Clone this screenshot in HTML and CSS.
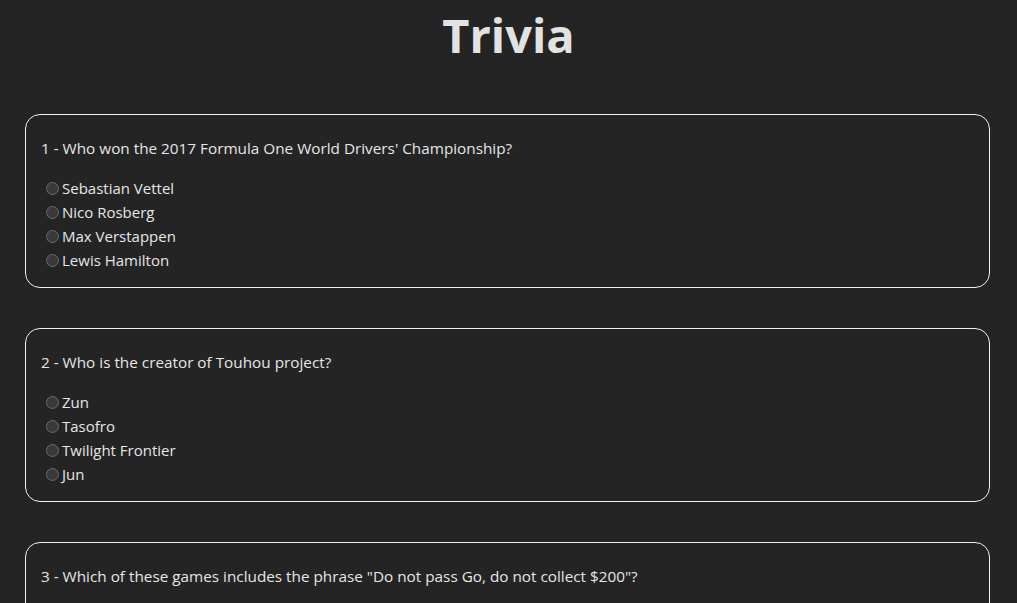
FILE: index.html
```html
<!DOCTYPE html>
<html lang="en">
<head>
<meta charset="utf-8">
<title>Trivia</title>
<link rel="stylesheet" href="styles.css">
</head>
<body>
<h1 class="title">Trivia</h1>
<div class="quiz">
  <div class="question">
    <p class="prompt">1 - Who won the 2017 Formula One World Drivers' Championship?</p>
    <label class="option"><input type="radio" name="q1"><span>Sebastian Vettel</span></label>
    <label class="option"><input type="radio" name="q1"><span>Nico Rosberg</span></label>
    <label class="option"><input type="radio" name="q1"><span>Max Verstappen</span></label>
    <label class="option"><input type="radio" name="q1"><span>Lewis Hamilton</span></label>
  </div>
  <div class="question">
    <p class="prompt">2 - Who is the creator of Touhou project?</p>
    <label class="option"><input type="radio" name="q2"><span>Zun</span></label>
    <label class="option"><input type="radio" name="q2"><span>Tasofro</span></label>
    <label class="option"><input type="radio" name="q2"><span>Twilight Frontier</span></label>
    <label class="option"><input type="radio" name="q2"><span>Jun</span></label>
  </div>
  <div class="question">
    <p class="prompt">3 - Which of these games includes the phrase "Do not pass Go, do not collect $200"?</p>
    <label class="option"><input type="radio" name="q3"><span>Monopoly</span></label>
    <label class="option"><input type="radio" name="q3"><span>Pay Day</span></label>
    <label class="option"><input type="radio" name="q3"><span>Cluedo</span></label>
    <label class="option"><input type="radio" name="q3"><span>Coppit</span></label>
  </div>
</div>
</body>
</html>
```
FILE: styles.css
```css
html, body {
  margin: 0;
  padding: 0;
  background: #242424;
}
body {
  font-family: "Open Sans", "Noto Sans", sans-serif;
  color: #e6e6e6;
  font-size: 15px;
}
.title {
  margin: 0;
  padding-top: 3px;
  text-align: center;
  font-size: 47px;
  line-height: 64px;
  font-weight: 700;
  color: #e2e2e2;
}
.quiz {
  display: flex;
  flex-direction: column;
  gap: 40px;
  padding: 47px 27px 40px 25px;
}
.question {
  border: 1px solid #f0f0f0;
  border-radius: 15px;
  padding: 0 15px 15px;
  display: flex;
  flex-direction: column;
  align-items: flex-start;
}
.prompt {
  margin: 21px 0 16px;
  line-height: 24px;
  font-size: 15.3px;
}
.option {
  display: flex;
  align-items: center;
  height: 24px;
  line-height: 24px;
}
.option input {
  appearance: none;
  -webkit-appearance: none;
  width: 13px;
  height: 13px;
  margin: 0 3px 0 5px;
  border-radius: 50%;
  border: 1px solid #6a6a6a;
  background: #3a3a3a;
  box-sizing: border-box;
}
```
